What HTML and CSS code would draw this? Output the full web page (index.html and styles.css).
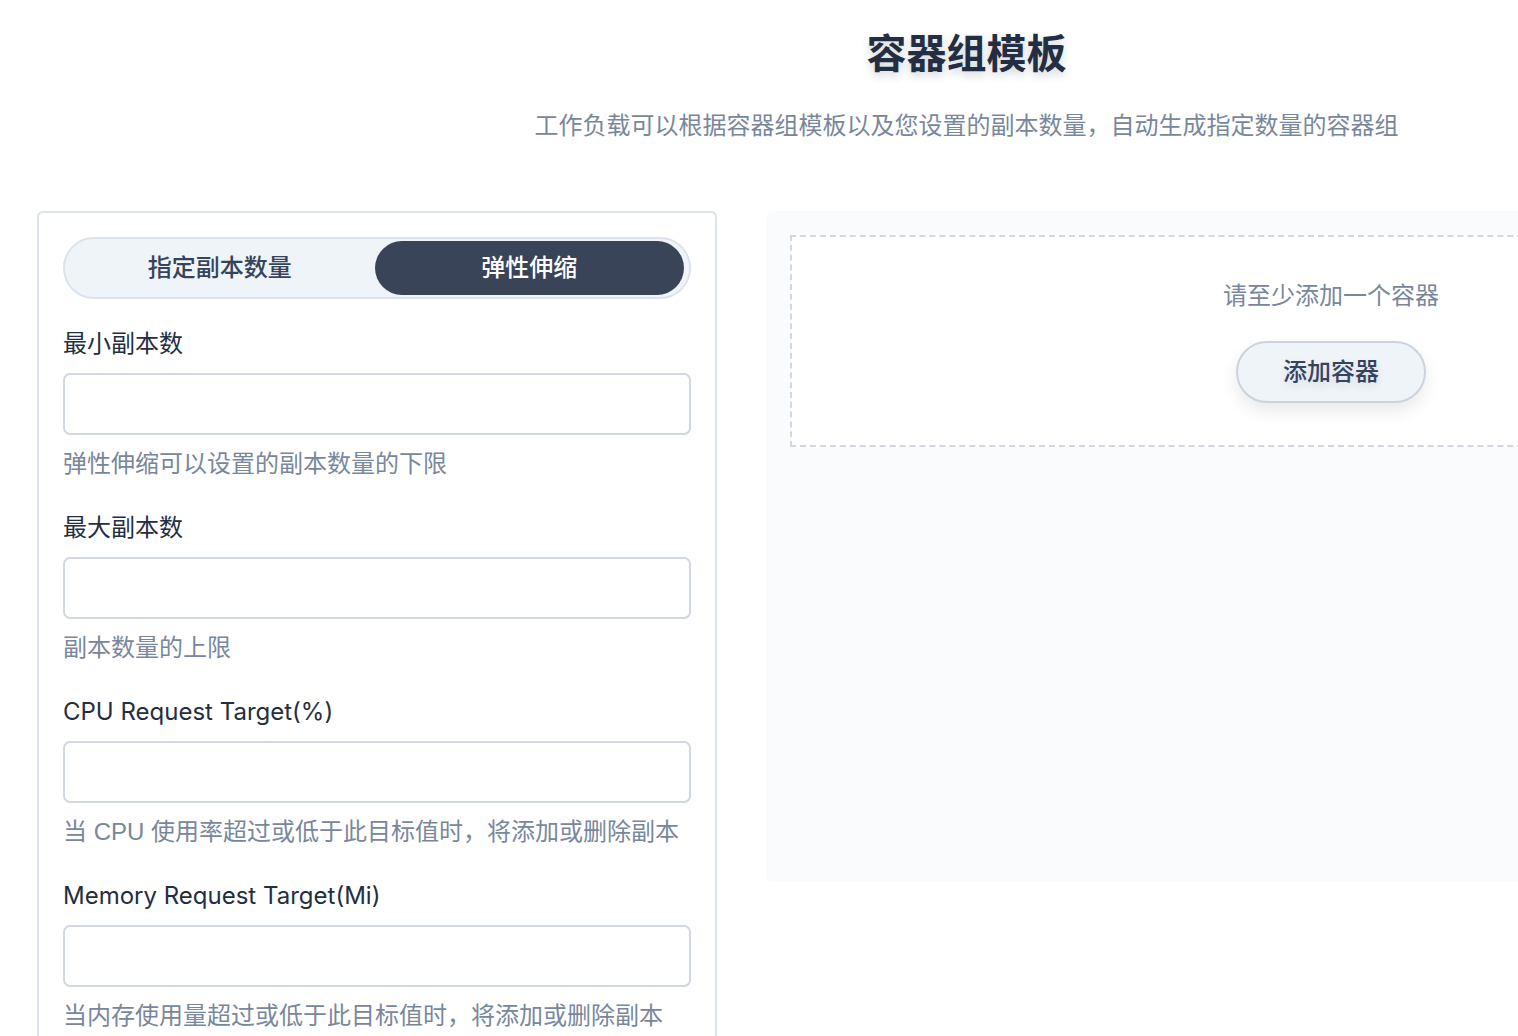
FILE: index.html
```html
<!DOCTYPE html>
<html lang="zh-CN">
<head>
<meta charset="utf-8">
<title>容器组模板</title>
<link rel="stylesheet" href="styles.css">
</head>
<body>
<div class="page">
  <header class="head">
    <h1 class="title">容器组模板</h1>
    <p class="desc">工作负载可以根据容器组模板以及您设置的副本数量，自动生成指定数量的容器组</p>
  </header>
  <div class="body">
    <section class="left">
      <div class="toggle">
        <div class="opt">指定副本数量</div>
        <div class="opt active">弹性伸缩</div>
      </div>
      <div class="field">
        <label class="label">最小副本数</label>
        <div class="input"></div>
        <div class="hint">弹性伸缩可以设置的副本数量的下限</div>
      </div>
      <div class="field">
        <label class="label">最大副本数</label>
        <div class="input"></div>
        <div class="hint">副本数量的上限</div>
      </div>
      <div class="field">
        <label class="label">CPU Request Target(%)</label>
        <div class="input"></div>
        <div class="hint">当 CPU 使用率超过或低于此目标值时，将添加或删除副本</div>
      </div>
      <div class="field">
        <label class="label">Memory Request Target(Mi)</label>
        <div class="input"></div>
        <div class="hint">当内存使用量超过或低于此目标值时，将添加或删除副本</div>
      </div>
    </section>
    <section class="right">
      <div class="empty">
        <div class="empty-text">请至少添加一个容器</div>
        <button class="add-btn">添加容器</button>
      </div>
    </section>
  </div>
</div>
</body>
</html>
```

FILE: styles.css
```css
html, body {
  margin: 0;
  padding: 0;
  background: #ffffff;
  overflow: hidden;
}
body {
  font-family: "Liberation Sans", "Noto Sans CJK SC", sans-serif;
  color: #242e42;
}
.page {
  width: 1859px;
  margin-left: 37px;
}
.head {
  padding-top: 26px;
  text-align: center;
}
.title {
  margin: 0;
  font-size: 40px;
  line-height: 56px;
  font-weight: 700;
  color: #242e42;
  text-shadow: 0 4px 8px rgba(36, 46, 66, 0.2);
}
.desc {
  margin: 27px 0 0;
  font-size: 24px;
  line-height: 34px;
  color: #79879c;
}
.body {
  display: flex;
  align-items: flex-start;
  gap: 49px;
  margin-top: 68px;
}
.left {
  width: 680px;
  box-sizing: border-box;
  border: 2px solid #dde3ea;
  border-radius: 6px;
  padding: 24px 24px 40px;
  flex: none;
}
.toggle {
  display: grid;
  grid-template-columns: 1fr 1fr;
  height: 62px;
  box-sizing: border-box;
  border: 2px solid #dde3ea;
  border-radius: 31px;
  background: #eff4f9;
  padding: 2px 5px 2px 0;
}
.opt {
  display: flex;
  align-items: center;
  justify-content: center;
  font-size: 24px;
  line-height: 34px;
  font-weight: 500;
  color: #36435c;
  border-radius: 27px;
}
.opt.active {
  background: #3a4459;
  color: #ffffff;
}
.field {
  display: flex;
  flex-direction: column;
  margin-top: 28px;
}
.field + .field {
  margin-top: 30px;
}
.label {
  font-family: "Inter", "Noto Sans CJK SC", sans-serif;
  font-size: 24px;
  line-height: 34px;
  color: #242e42;
}
.input {
  margin-top: 12px;
  height: 62px;
  box-sizing: border-box;
  border: 2px solid #d1d8e0;
  border-radius: 7px;
  background: #ffffff;
}
.hint {
  margin-top: 12px;
  font-size: 24px;
  line-height: 34px;
  color: #79879c;
}
.right {
  flex: 1;
  height: 671px;
  box-sizing: border-box;
  background: #f9fbfd;
  border-radius: 7px;
  padding: 24px;
}
.empty {
  background: #ffffff;
  border: 2px dashed #d1d8e0;
  padding: 42px 0;
  display: flex;
  flex-direction: column;
  align-items: center;
}
.empty-text {
  font-size: 24px;
  line-height: 34px;
  color: #79879c;
}
.add-btn {
  margin-top: 28px;
  width: 190px;
  height: 62px;
  box-sizing: border-box;
  border: 2px solid #ccd3db;
  border-radius: 31px;
  background: #eff4f9;
  font-family: "Liberation Sans", "Noto Sans CJK SC", sans-serif;
  font-size: 24px;
  line-height: 34px;
  font-weight: 500;
  color: #36435c;
  box-shadow: 0 8px 16px rgba(36, 46, 66, 0.1);
  text-shadow: 0 4px 8px rgba(36, 46, 66, 0.12);
  padding: 0;
}
```
